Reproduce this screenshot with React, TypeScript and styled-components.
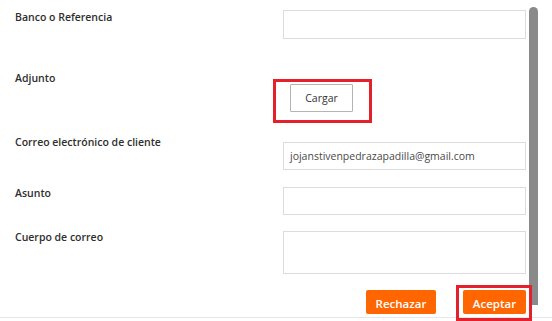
import React from "react";
import styled, { createGlobalStyle } from "styled-components";

const GlobalStyle = createGlobalStyle`
  html, body {
    margin: 0;
    padding: 0;
    background: #ffffff;
  }
  body {
    font-family: "Open Sans", "Noto Sans", Arial, sans-serif;
  }
`;

const Page = styled.div`
  width: 552px;
  height: 321px;
  overflow: hidden;
  background: #ffffff;
`;

const Body = styled.div`
  display: flex;
  height: 317px;
  border-bottom: 1px solid #e6e6e6;
`;

const Form = styled.div`
  width: 511px;
  padding: 10px 0 0 15px;
  display: flex;
  flex-direction: column;
`;

const Row = styled.div<{ $top: number }>`
  display: grid;
  grid-template-columns: 268px 243px;
  align-items: start;
  margin-top: ${(p) => p.$top}px;
`;

const Label = styled.div`
  font-size: 10.5px;
  line-height: 15px;
  font-weight: 600;
  color: #2e2e2e;
`;

const Field = styled.div<{ $offset: number }>`
  padding-top: ${(p) => p.$offset}px;
  display: flex;
`;

const Input = styled.div<{ $h: number }>`
  box-sizing: border-box;
  width: 243px;
  height: ${(p) => p.$h}px;
  border: 1px solid #dcdcdc;
  padding: 0 6px;
  font-size: 10.5px;
  line-height: 26px;
  color: #4a4a4a;
`;

const Highlight = styled.div<{ $pad: string; $shift: number }>`
  position: relative;
  z-index: 1;
  display: flex;
  border: 3px solid #e4202a;
  padding: ${(p) => p.$pad};
  margin-left: ${(p) => p.$shift}px;
`;

const LoadButton = styled.button`
  box-sizing: border-box;
  width: 63px;
  height: 28px;
  background: #ffffff;
  border: 1px solid #b4b4b4;
  border-radius: 1px;
  font-family: inherit;
  font-size: 10.5px;
  color: #333333;
  padding: 0;
`;

const Footer = styled.div`
  display: flex;
  justify-content: flex-end;
  align-items: flex-start;
  margin-top: 11px;
  width: 517px;
`;

const ActionButton = styled.button<{ $w: number }>`
  box-sizing: border-box;
  width: ${(p) => p.$w}px;
  height: 24px;
  background: #ff6600;
  border: none;
  border-radius: 2px;
  color: #ffffff;
  font-family: inherit;
  font-size: 11.5px;
  font-weight: 600;
  padding: 2px 0 0;
`;

const Reject = styled(ActionButton)`
  margin-top: 5px;
  margin-right: 20px;
`;

const Track = styled.div`
  width: 26px;
  padding: 7px 0 0 3px;
  box-sizing: border-box;
`;

const Thumb = styled.div`
  width: 9px;
  height: 298px;
  background: #8a8a8a;
  border-radius: 5px 5px 0 0;
`;

export default function App() {
  return (
    <Page>
      <GlobalStyle />
      <Body>
        <Form>
          <Row $top={0}>
            <Label>Banco o Referencia</Label>
            <Field $offset={0}>
              <Input $h={29} />
            </Field>
          </Row>
          <Row $top={32}>
            <Label>Adjunto</Label>
            <Field $offset={8}>
              <Highlight $pad="2px 16px 8px 14px" $shift={-10}>
                <LoadButton>Cargar</LoadButton>
              </Highlight>
            </Field>
          </Row>
          <Row $top={12}>
            <Label>Correo electrónico de cliente</Label>
            <Field $offset={7}>
              <Input $h={28}>jojanstivenpedrazapadilla@gmail.com</Input>
            </Field>
          </Row>
          <Row $top={16}>
            <Label>Asunto</Label>
            <Field $offset={1}>
              <Input $h={28} />
            </Field>
          </Row>
          <Row $top={15}>
            <Label>Cuerpo de correo</Label>
            <Field $offset={1}>
              <Input $h={43} />
            </Field>
          </Row>
          <Footer>
            <Reject $w={70}>Rechazar</Reject>
            <Highlight $pad="2px 3px 4px 4px" $shift={0}>
              <ActionButton $w={63}>Aceptar</ActionButton>
            </Highlight>
          </Footer>
        </Form>
        <Track>
          <Thumb />
        </Track>
      </Body>
    </Page>
  );
}
